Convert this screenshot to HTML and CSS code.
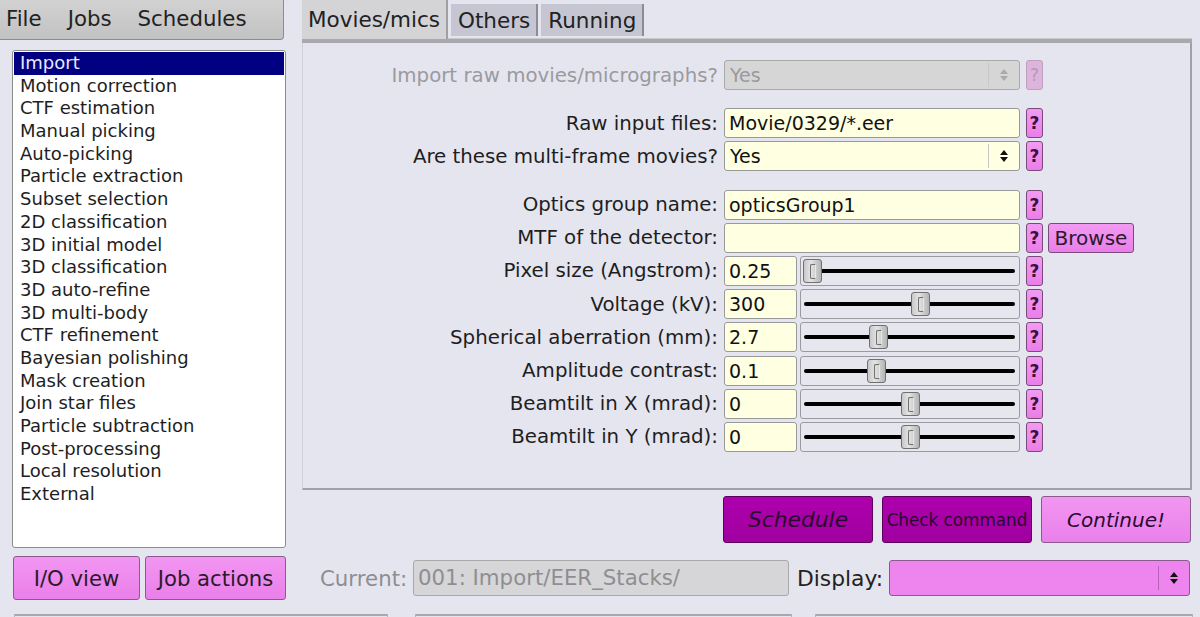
FILE: index.html
```html
<!DOCTYPE html>
<html>
<head>
<meta charset="utf-8">
<link rel="stylesheet" href="styles.css">
</head>
<body>
<div class="app">
  <div class="main">
    <div class="left">
      <div class="menubar"><span>File</span><span>Jobs</span><span>Schedules</span></div>
      <div class="joblist">
        <div class="item sel">Import</div>
        <div class="item">Motion correction</div>
        <div class="item">CTF estimation</div>
        <div class="item">Manual picking</div>
        <div class="item">Auto-picking</div>
        <div class="item">Particle extraction</div>
        <div class="item">Subset selection</div>
        <div class="item">2D classification</div>
        <div class="item">3D initial model</div>
        <div class="item">3D classification</div>
        <div class="item">3D auto-refine</div>
        <div class="item">3D multi-body</div>
        <div class="item">CTF refinement</div>
        <div class="item">Bayesian polishing</div>
        <div class="item">Mask creation</div>
        <div class="item">Join star files</div>
        <div class="item">Particle subtraction</div>
        <div class="item">Post-processing</div>
        <div class="item">Local resolution</div>
        <div class="item">External</div>
      </div>
      <div class="leftbtns">
        <div class="vbtn io">I/O view</div>
        <div class="vbtn ja">Job actions</div>
      </div>
    </div>
    <div class="right">
      <div class="tabs">
        <div class="tab active">Movies/mics</div>
        <div class="tab">Others</div>
        <div class="tab">Running</div>
      </div>
      <div class="panel">
        <div class="row disabled">
          <div class="label">Import raw movies/micrographs?</div>
          <div class="choice dis"><span>Yes</span><span class="spin"><svg width="10" height="14" viewBox="0 0 10 14"><path d="M1 6 L5 1 L9 6 Z M1 8 L5 13 L9 8 Z" fill="#aaa"/></svg></span></div>
          <div class="help dis">?</div>
        </div>
        <div class="row grp">
          <div class="label">Raw input files:</div>
          <div class="input">Movie/0329/*.eer</div>
          <div class="help">?</div>
        </div>
        <div class="row">
          <div class="label">Are these multi-frame movies?</div>
          <div class="choice"><span>Yes</span><span class="spin"><svg width="10" height="14" viewBox="0 0 10 14"><path d="M1 6 L5 1 L9 6 Z M1 8 L5 13 L9 8 Z" fill="#111"/></svg></span></div>
          <div class="help">?</div>
        </div>
        <div class="row grp">
          <div class="label">Optics group name:</div>
          <div class="input">opticsGroup1</div>
          <div class="help">?</div>
        </div>
        <div class="row">
          <div class="label">MTF of the detector:</div>
          <div class="input"></div>
          <div class="help">?</div>
          <div class="browse">Browse</div>
        </div>
        <div class="row">
          <div class="label">Pixel size (Angstrom):</div>
          <div class="input val">0.25</div>
          <div class="slider"><div class="track"></div><div class="thumb" style="left:2px"></div></div>
          <div class="help">?</div>
        </div>
        <div class="row">
          <div class="label">Voltage (kV):</div>
          <div class="input val">300</div>
          <div class="slider"><div class="track"></div><div class="thumb" style="left:110px"></div></div>
          <div class="help">?</div>
        </div>
        <div class="row">
          <div class="label">Spherical aberration (mm):</div>
          <div class="input val">2.7</div>
          <div class="slider"><div class="track"></div><div class="thumb" style="left:68px"></div></div>
          <div class="help">?</div>
        </div>
        <div class="row">
          <div class="label">Amplitude contrast:</div>
          <div class="input val">0.1</div>
          <div class="slider"><div class="track"></div><div class="thumb" style="left:66px"></div></div>
          <div class="help">?</div>
        </div>
        <div class="row">
          <div class="label">Beamtilt in X (mrad):</div>
          <div class="input val">0</div>
          <div class="slider"><div class="track"></div><div class="thumb" style="left:100px"></div></div>
          <div class="help">?</div>
        </div>
        <div class="row">
          <div class="label">Beamtilt in Y (mrad):</div>
          <div class="input val">0</div>
          <div class="slider"><div class="track"></div><div class="thumb" style="left:100px"></div></div>
          <div class="help">?</div>
        </div>
      </div>
      <div class="actions">
        <div class="abtn dark it big">Schedule</div>
        <div class="abtn dark small">Check command</div>
        <div class="abtn light it">Continue!</div>
      </div>
      <div class="current">
        <div class="curlabel">Current:</div>
        <div class="curinput">001: Import/EER_Stacks/</div>
        <div class="displabel">Display:</div>
        <div class="dispchoice"><span class="spin"><svg width="10" height="14" viewBox="0 0 10 14"><path d="M1 6 L5 1 L9 6 Z M1 8 L5 13 L9 8 Z" fill="#111"/></svg></span></div>
      </div>
    </div>
  </div>
  <div class="strip">
    <div class="sbox s1"></div>
    <div class="sbox s2"></div>
    <div class="sbox s3"></div>
  </div>
</div>
</body>
</html>
```
FILE: styles.css
```css
html, body {
  margin: 0;
  padding: 0;
}
body {
  width: 1200px;
  height: 617px;
  overflow: hidden;
  background: #e5e5ef;
  font-family: "DejaVu Sans", sans-serif;
  color: #1e1e1e;
}
.app {
  display: flex;
  flex-direction: column;
}
.main {
  display: flex;
  height: 614px;
}
.left {
  width: 290px;
  display: flex;
  flex-direction: column;
}
.menubar {
  width: 277px;
  height: 37px;
  background: linear-gradient(#d2d2d2, #c2c2c2);
  border-right: 1px solid #8c8c8c;
  border-bottom: 1px solid #8c8c8c;
  border-bottom-right-radius: 4px;
  display: flex;
  align-items: center;
  gap: 26px;
  padding-left: 6px;
  padding-bottom: 2px;
  font-size: 21.3px;
  color: #222;
}
.joblist {
  margin-top: 10px;
  margin-left: 12px;
  width: 270px;
  height: 494px;
  background: #fff;
  border: 1px solid #8c8c8c;
  border-radius: 3px;
  padding: 1px;
  font-size: 18px;
}
.item {
  height: 22.7px;
  line-height: 22.7px;
  padding-left: 6px;
  white-space: nowrap;
}
.item.sel {
  background: #000080;
  color: #e8e8ff;
}
.leftbtns {
  display: flex;
  gap: 5px;
  margin-top: 8px;
  margin-left: 13px;
}
.vbtn {
  height: 42px;
  background: linear-gradient(#f296f2, #ea7fea);
  border: 1px solid #8a5a8a;
  border-radius: 3px;
  display: flex;
  align-items: center;
  justify-content: center;
  font-size: 21.2px;
  color: #2a1a2a;
}
.vbtn.io { width: 125px; }
.vbtn.ja { width: 139px; }
.right {
  margin-left: 12px;
  width: 890px;
  display: flex;
  flex-direction: column;
}
.tabs {
  display: flex;
  align-items: flex-start;
  gap: 3px;
  height: 39px;
  border-bottom: 4px solid #a8a8ae;
  box-shadow: inset 0 -1px 0 #c8c8c8;
}
.tab {
  height: 32px;
  margin-top: 4px;
  padding: 0 6px 0 7px;
  display: flex;
  align-items: center;
  font-size: 21.5px;
  background: #c6c6d2;
  border-right: 2px solid #8c8c96;
  color: #222;
}
.tab.active {
  height: 39px;
  margin-top: 0;
  background: #d4d4d6;
  border-right: 2px solid #a0a0a4;
  padding: 0 6px 0 6px;
  width: 132px;
}
.panel {
  border-left: 1px solid #d0d0da;
  border-right: 2px solid #a0a0a8;
  border-bottom: 2px solid #a0a0a8;
  padding-top: 17px;
  box-sizing: border-box;
  height: 447px;
  display: flex;
  flex-direction: column;
  gap: 3.2px;
}
.row {
  display: flex;
  align-items: center;
  height: 30px;
  flex-shrink: 0;
}
.row.grp {
  margin-top: 15px;
}
.label {
  width: 415px;
  text-align: right;
  font-size: 19.8px;
  margin-right: 6px;
  white-space: nowrap;
  color: #1e1e1e;
}
.row.disabled .label {
  color: #9a9a9e;
}
.input {
  height: 28px;
  background: #ffffe2;
  border: 1px solid #999;
  border-radius: 3px;
  font-size: 19px;
  line-height: 28px;
  padding-left: 4px;
  width: 290px;
  color: #111;
  white-space: nowrap;
}
.input.val {
  width: 67px;
  margin-right: 3px;
}
.choice {
  height: 28px;
  background: #ffffe2;
  border: 1px solid #999;
  border-radius: 3px;
  font-size: 19px;
  display: flex;
  align-items: center;
  justify-content: space-between;
  padding-left: 5px;
  color: #111;
  width: 289px;
}
.choice.dis {
  background: #d6d6d6;
  border-color: #aaa;
  color: #9a9a9a;
}
.spin {
  width: 30px;
  height: 24px;
  border-left: 1px solid #c8c8c8;
  display: flex;
  align-items: center;
  justify-content: center;
}
.help {
  width: 15px;
  height: 28px;
  margin-left: 6px;
  background: linear-gradient(#f29af2, #e97ee9);
  border: 1px solid #7a4a7a;
  border-radius: 3px;
  font-size: 17px;
  font-weight: 600;
  color: #3a1040;
  display: flex;
  align-items: center;
  justify-content: center;
}
.help.dis {
  background: #dcb4dc;
  border-color: #c0a0c0;
  color: #b898b8;
  font-weight: normal;
}
.browse {
  margin-left: 5px;
  width: 84px;
  height: 28px;
  background: linear-gradient(#f29af2, #e97ee9);
  border: 1px solid #7a4a7a;
  border-radius: 3px;
  font-size: 20px;
  color: #2a1a2a;
  display: flex;
  align-items: center;
  justify-content: center;
}
.slider {
  position: relative;
  width: 218px;
  height: 28px;
  border: 1px solid #9a9aa0;
  border-radius: 3px;
  background: #e6e6ee;
}
.track {
  position: absolute;
  left: 3px;
  right: 4px;
  top: 12px;
  height: 4px;
  background: #000;
  border-radius: 2px;
}
.thumb {
  position: absolute;
  top: 2px;
  width: 17px;
  height: 22px;
  background: linear-gradient(90deg, #c8c8c8, #e4e4e4 40%, #b4b4b4);
  border: 1px solid #707070;
  border-radius: 3px;
}
.thumb::after {
  content: "";
  position: absolute;
  left: 6px;
  top: 4px;
  width: 4px;
  height: 13px;
  border: 1px solid #707070;
  border-right-color: #e8e8e8;
  border-radius: 2px 0 0 2px;
}
.actions {
  display: flex;
  justify-content: flex-end;
  gap: 9px;
  margin-top: 6px;
  padding-right: 1px;
}
.abtn {
  width: 148px;
  height: 45px;
  border-radius: 3px;
  display: flex;
  align-items: center;
  justify-content: center;
  font-size: 20px;
  color: #2a0a30;
  white-space: nowrap;
}
.abtn.dark {
  background: linear-gradient(#ae00ae, #a000a0);
  border: 1px solid #5a005a;
}
.abtn.light {
  background: linear-gradient(#f296f2, #ea80ea);
  border: 1px solid #8a5a8a;
}
.abtn.it {
  font-style: italic;
}
.abtn.big {
  font-size: 21.8px;
}
.abtn.small {
  font-size: 16.8px;
}
.current {
  display: flex;
  align-items: center;
  margin-top: 17px;
  height: 36px;
}
.curlabel {
  margin-left: 18px;
  font-size: 21.3px;
  color: #8e8e92;
  width: 87px;
  white-space: nowrap;
}
.curinput {
  margin-left: 6px;
  width: 370px;
  height: 34px;
  background: #d6d6d8;
  border: 1px solid #aaa;
  border-radius: 3px;
  font-size: 21.3px;
  color: #8e8e92;
  line-height: 34px;
  padding-left: 4px;
  white-space: nowrap;
}
.displabel {
  margin-left: 8px;
  font-size: 21.8px;
  color: #222;
  width: 86px;
  white-space: nowrap;
}
.dispchoice {
  margin-left: 6px;
  width: 299px;
  height: 34px;
  background: #ee84ee;
  border: 1px solid #8a5a8a;
  border-radius: 3px;
  display: flex;
  justify-content: flex-end;
  align-items: center;
}
.dispchoice .spin {
  border-left-color: #b860b8;
}
.strip {
  position: relative;
  height: 3px;
}
.sbox {
  height: 10px;
  border-top: 2px solid #a8a8ae;
  border-left: 1px solid #b8b8c0;
  border-right: 1px solid #b8b8c0;
  position: absolute;
  top: 0;
}
.s1 { left: 14px; width: 372px; }
.s2 { left: 415px; width: 375px; }
.s3 { left: 815px; width: 376px; }
```
